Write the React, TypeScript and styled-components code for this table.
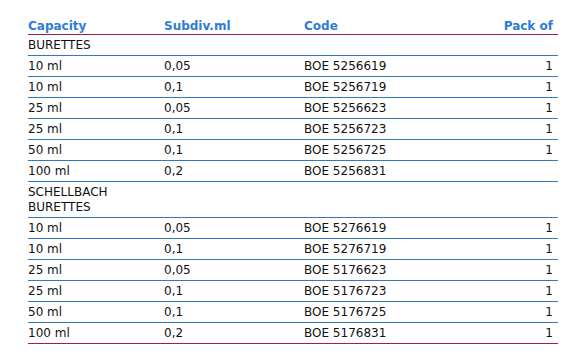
import { Fragment } from "react";
import styled, { createGlobalStyle } from "styled-components";

const GlobalStyle = createGlobalStyle`
  html, body {
    margin: 0;
    padding: 0;
    background: #ffffff;
  }
  body {
    font-family: "DejaVu Sans", Verdana, sans-serif;
  }
`;

const Page = styled.div`
  padding: 12px 26px 0 28px;
`;

const Table = styled.table`
  width: 530px;
  border-collapse: collapse;
  table-layout: fixed;
  font-size: 12px;
  line-height: 15px;
  color: #111111;
`;

const HeadCell = styled.th<{ $right?: boolean }>`
  text-align: ${({ $right }) => ($right ? "right" : "left")};
  font-weight: bold;
  color: #2d7cd6;
  padding: 7px 5px 0 0;
  border-bottom: 1px solid #a51f3f;
  vertical-align: bottom;
`;

const Row = styled.tr<{ $last?: boolean }>`
  border-bottom: 1px solid ${({ $last }) => ($last ? "#a51f3f" : "#2f78c2")};
`;

const Cell = styled.td<{ $right?: boolean }>`
  text-align: ${({ $right }) => ($right ? "right" : "left")};
  padding: 3px 5px 2px 0;
  vertical-align: middle;
`;

type Item = { cap: string; sub: string; code: string; pack: string };

type Group = { title: string; items: Item[] };

const groups: Group[] = [
  {
    title: "BURETTES",
    items: [
      { cap: "10 ml", sub: "0,05", code: "BOE 5256619", pack: "1" },
      { cap: "10 ml", sub: "0,1", code: "BOE 5256719", pack: "1" },
      { cap: "25 ml", sub: "0,05", code: "BOE 5256623", pack: "1" },
      { cap: "25 ml", sub: "0,1", code: "BOE 5256723", pack: "1" },
      { cap: "50 ml", sub: "0,1", code: "BOE 5256725", pack: "1" },
      { cap: "100 ml", sub: "0,2", code: "BOE 5256831", pack: "" },
    ],
  },
  {
    title: "SCHELLBACH BURETTES",
    items: [
      { cap: "10 ml", sub: "0,05", code: "BOE 5276619", pack: "1" },
      { cap: "10 ml", sub: "0,1", code: "BOE 5276719", pack: "1" },
      { cap: "25 ml", sub: "0,05", code: "BOE 5176623", pack: "1" },
      { cap: "25 ml", sub: "0,1", code: "BOE 5176723", pack: "1" },
      { cap: "50 ml", sub: "0,1", code: "BOE 5176725", pack: "1" },
      { cap: "100 ml", sub: "0,2", code: "BOE 5176831", pack: "1" },
    ],
  },
];

export default function App() {
  return (
    <Page>
      <GlobalStyle />
      <Table>
        <colgroup>
          <col style={{ width: 136 }} />
          <col style={{ width: 140 }} />
          <col style={{ width: 150 }} />
          <col style={{ width: 104 }} />
        </colgroup>
        <thead>
          <tr>
            <HeadCell>Capacity</HeadCell>
            <HeadCell>Subdiv.ml</HeadCell>
            <HeadCell>Code</HeadCell>
            <HeadCell $right>Pack of</HeadCell>
          </tr>
        </thead>
        <tbody>
          {groups.map((g, gi) => (
            <Fragment key={g.title}>
              <Row>
                <Cell>{g.title}</Cell>
                <Cell />
                <Cell />
                <Cell />
              </Row>
              {g.items.map((it, i) => (
                <Row
                  key={g.title + i}
                  $last={gi === groups.length - 1 && i === g.items.length - 1}
                >
                  <Cell>{it.cap}</Cell>
                  <Cell>{it.sub}</Cell>
                  <Cell>{it.code}</Cell>
                  <Cell $right>{it.pack}</Cell>
                </Row>
              ))}
            </Fragment>
          ))}
        </tbody>
      </Table>
    </Page>
  );
}
